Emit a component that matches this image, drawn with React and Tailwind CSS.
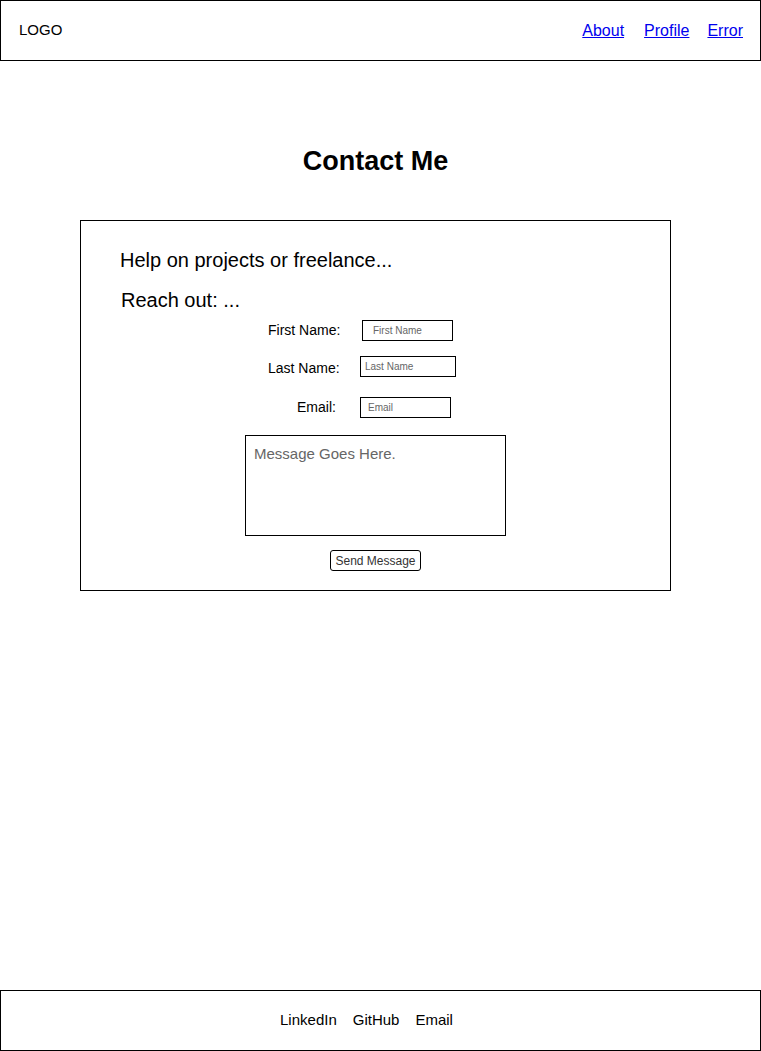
import { useState } from "react";

const NAV = ["About", "Profile", "Error"];
const SOCIALS = ["LinkedIn", "GitHub", "Email"];

function Field({ label, placeholder, labelClass, inputClass, value, onChange }) {
  return (
    <div className="flex items-center">
      <span className={`shrink-0 text-[14px] text-black ${labelClass}`}>{label}</span>
      <input
        value={value}
        onChange={e => onChange(e.target.value)}
        placeholder={placeholder}
        className={`h-[21px] border border-black bg-white text-[10px] text-black outline-none placeholder:text-[#666] ${inputClass}`}
      />
    </div>
  );
}

export default function App() {
  const [form, setForm] = useState({ first: "", last: "", email: "", message: "" });
  const update = key => val => setForm(prev => ({ ...prev, [key]: val }));

  return (
    <div className="flex min-h-screen flex-col bg-white font-['Liberation_Sans',Arial,sans-serif] text-black">
      {/* Header */}
      <header className="flex h-[61px] items-center justify-between border border-black pl-[18px] pr-[17px]">
        <span className="text-[15px]">LOGO</span>
        <nav className="flex items-center gap-[20px] text-[16px]">
          {NAV.map((item, i) => (
            <a
              key={item}
              href="#"
              className={`text-[#0000ee] underline ${i === 2 ? "-ml-[2px]" : ""}`}
            >
              {item}
            </a>
          ))}
        </nav>
      </header>

      {/* Main */}
      <main className="flex-1">
        <h1 className="mt-[84px] pr-[10px] text-center text-[27px] font-bold leading-[32px]">Contact Me</h1>

        <section className="mt-[43px] ml-[80px] h-[371px] w-[591px] border border-black">
          <p className="mt-[27px] ml-[39px] text-[20px] leading-[24px]">Help on projects or freelance...</p>
          <p className="mt-[16px] ml-[40px] text-[20px] leading-[24px]">Reach out: ...</p>

          <div className="ml-[187px] mt-[8px] flex flex-col">
            <Field
              label="First Name:"
              placeholder="First Name"
              labelClass="w-[94px]"
              inputClass="w-[91px] pl-[10px]"
              value={form.first}
              onChange={update("first")}
            />
            <div className="mt-[17px]">
              <Field
                label="Last Name:"
                placeholder="Last Name"
                labelClass="w-[92px]"
                inputClass="w-[96px] pl-[4px] -mt-[4px]"
                value={form.last}
                onChange={update("last")}
              />
            </div>
            <div className="mt-[18px]">
              <Field
                label="Email:"
                placeholder="Email"
                labelClass="w-[92px] pl-[29px]"
                inputClass="w-[91px] pl-[7px]"
                value={form.email}
                onChange={update("email")}
              />
            </div>
          </div>

          <textarea
            value={form.message}
            onChange={e => update("message")(e.target.value)}
            placeholder="Message Goes Here."
            className="ml-[164px] mt-[17px] block h-[101px] w-[261px] resize-none border border-black px-[8px] pt-[8px] text-[15px] leading-[20px] outline-none placeholder:text-[#666]"
          />

          <div className="mt-[14px] flex justify-center">
            <button className="h-[21px] w-[91px] rounded-[3px] border border-black text-[12px] text-[#333]">
              Send Message
            </button>
          </div>
        </section>
      </main>

      {/* Footer */}
      <footer className="flex h-[61px] items-center justify-center border border-black text-[15px]">
        <div className="flex gap-[16px] pr-[28px]">
          {SOCIALS.map(s => (
            <span key={s}>{s}</span>
          ))}
        </div>
      </footer>
    </div>
  );
}
